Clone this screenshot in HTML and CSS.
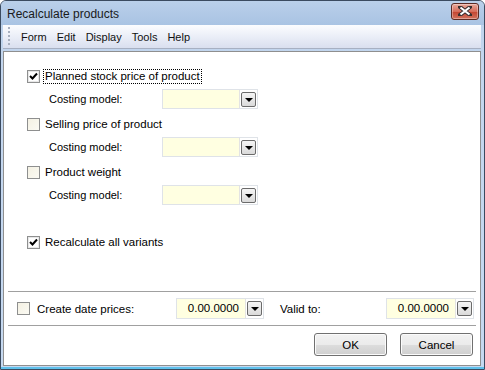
FILE: index.html
```html
<!DOCTYPE html>
<html lang="en">
<head>
    <title>Recalculate products</title>
    <meta charset="utf-8"/>
    <link rel="stylesheet" href="styles.css">
</head>
<body>
<div class="window">
    <div class="titlebar">
        <span class="title">Recalculate products</span>
        <span class="close">
            <svg width="14" height="10" viewBox="0 0 14 10">
                <path d="M2 1 L12 9 M12 1 L2 9" stroke="#3a3030" stroke-width="4" stroke-linecap="square"/>
                <path d="M2.5 1.5 L11.5 8.5 M11.5 1.5 L2.5 8.5" stroke="#ffffff" stroke-width="2.2"/>
            </svg>
        </span>
    </div>

    <div class="menubar">
        <span class="grip"></span>
        <span class="menu">Form</span>
        <span class="menu">Edit</span>
        <span class="menu">Display</span>
        <span class="menu">Tools</span>
        <span class="menu">Help</span>
    </div>

    <div class="panel">
        <div class="options">
            <div class="group">
                <div class="check-row">
                    <span class="checkbox checked"><svg width="9" height="9" viewBox="0 0 9 9"><path d="M1 4 L3.5 6.5 L8 1.5" stroke="#000" stroke-width="2" fill="none"/></svg></span>
                    <span class="focus">Planned stock price of product</span>
                </div>
                <div class="combo-row">
                    <span class="combo-label">Costing model:</span>
                    <span class="combo"><span class="combo-value"></span><span class="drop"><span class="arrow"></span></span></span>
                </div>
            </div>

            <div class="group">
                <div class="check-row">
                    <span class="checkbox"></span>
                    <span>Selling price of product</span>
                </div>
                <div class="combo-row">
                    <span class="combo-label">Costing model:</span>
                    <span class="combo"><span class="combo-value"></span><span class="drop"><span class="arrow"></span></span></span>
                </div>
            </div>

            <div class="group">
                <div class="check-row">
                    <span class="checkbox"></span>
                    <span>Product weight</span>
                </div>
                <div class="combo-row">
                    <span class="combo-label">Costing model:</span>
                    <span class="combo"><span class="combo-value"></span><span class="drop"><span class="arrow"></span></span></span>
                </div>
            </div>

            <div class="check-row recalc">
                <span class="checkbox checked"><svg width="9" height="9" viewBox="0 0 9 9"><path d="M1 4 L3.5 6.5 L8 1.5" stroke="#000" stroke-width="2" fill="none"/></svg></span>
                <span>Recalculate all variants</span>
            </div>
        </div>

        <div class="sep"></div>

        <div class="date-row">
            <span class="checkbox"></span>
            <span class="date-label">Create date prices:</span>
            <span class="combo date"><span class="combo-value">0.00.0000</span><span class="drop"><span class="arrow"></span></span></span>
            <span class="valid-label">Valid to:</span>
            <span class="combo date"><span class="combo-value">0.00.0000</span><span class="drop"><span class="arrow"></span></span></span>
        </div>

        <div class="sep"></div>

        <div class="buttons">
            <span class="button">OK</span>
            <span class="button">Cancel</span>
        </div>
    </div>
</div>
</body>
</html>
```

FILE: styles.css
```css
body {
    margin: 0;
    padding: 0;
    background: #ffffff;
}

.window {
    box-sizing: border-box;
    width: 485px;
    height: 370px;
    display: flex;
    flex-direction: column;
    border: 1px solid #3b4b60;
    border-radius: 6px 6px 0 0;
    background: linear-gradient(#bcd2ec, #c3d6ee 60px, #c6d9f0);
    box-shadow: inset 0 -2px 0 #5fc1ec;
    padding: 0 3px 3px 2px;
    font-family: "Liberation Sans", Arial, sans-serif;
    font-size: 11px;
    color: #000;
    overflow: hidden;
}

/* title bar */
.titlebar {
    height: 24px;
    display: flex;
    align-items: center;
    justify-content: space-between;
    background: linear-gradient(#bad0ea, #a9c3e3);
    margin: 0 -3px 0 -2px;
    padding: 0 5px 0 6px;
}

.title {
    font-size: 12px;
    color: #1a1a1a;
    padding-top: 1px;
}

.close {
    width: 28px;
    height: 17px;
    box-sizing: border-box;
    margin-top: -4px;
    display: flex;
    align-items: center;
    justify-content: center;
    border: 1px solid #5b2a24;
    border-radius: 3px;
    background: linear-gradient(#e9a99b, #d66c5b 50%, #c44733 55%, #d2735e);
    box-shadow: inset 0 0 0 1px rgba(255,255,255,0.35);
}

/* menu bar */
.menubar {
    height: 24px;
    display: flex;
    align-items: center;
    background: linear-gradient(#fbfcfe, #eef1f9 40%, #d9dfef);
    border-bottom: 1px solid #a7b0c2;
    box-sizing: border-box;
    padding-left: 5px;
    font-size: 11px;
}

.grip {
    width: 2px;
    height: 19px;
    margin-right: 6px;
    background-image: linear-gradient(#a8b0bf 50%, transparent 50%);
    background-size: 2px 4px;
}

.menu {
    padding: 0 5px;
    color: #111;
}

/* main panel */
.panel {
    flex: 1;
    margin-top: 2px;
    display: flex;
    flex-direction: column;
    background: #ffffff;
    border: 1px solid #8f8f8f;
}

.options {
    flex: 1;
    padding: 14px 0 0 23px;
}

.group {
    margin-bottom: 5px;
}

.check-row {
    height: 20px;
    display: flex;
    align-items: center;
    font-size: 11.5px;
}

.checkbox {
    width: 13px;
    height: 13px;
    box-sizing: border-box;
    border: 1px solid #8e8f8f;
    background: linear-gradient(135deg, #f4f1e3, #fbfaf3);
    margin-right: 5px;
    display: flex;
    align-items: center;
    justify-content: center;
    flex-shrink: 0;
}

.checkbox.checked {
    background: #ffffff;
    box-shadow: inset 0 0 0 1px #e8e8e8;
}

.focus {
    outline: 1px dotted #000;
    padding: 0 1px;
    margin-left: -1px;
    line-height: 13px;
}

.combo-row {
    height: 20px;
    margin-top: 3px;
    display: flex;
    align-items: center;
    padding-left: 22px;
}

.combo-label {
    width: 113px;
}

.combo {
    width: 96px;
    height: 20px;
    box-sizing: border-box;
    display: flex;
    align-items: center;
    border: 1px solid #dfe3e8;
    background: #ffffff;
}

.combo-value {
    flex: 1;
    height: 100%;
    background: #ffffe1;
    border-right: 1px solid #e3e3e3;
    text-align: right;
    line-height: 19px;
    padding-right: 6px;
}

.drop {
    width: 15px;
    height: 15px;
    box-sizing: border-box;
    margin: 0 1px 0 1px;
    border: 1px solid #6b6b6b;
    border-radius: 2px;
    background: linear-gradient(#f5f5f5, #dadada);
    display: flex;
    align-items: center;
    justify-content: center;
}

.arrow {
    width: 0;
    height: 0;
    border-left: 4px solid transparent;
    border-right: 4px solid transparent;
    border-top: 4px solid #000;
    margin-top: 1px;
}

.recalc {
    margin-top: 27px;
}

.sep {
    height: 1px;
    background: #a0a0a0;
    margin: 0 4px;
}

/* date prices */
.date-row {
    height: 33px;
    display: flex;
    align-items: center;
    padding-left: 13px;
    font-size: 11.5px;
}

.date-row .checkbox {
    margin-right: 7px;
}

.date-label {
    width: 139px;
}

.combo.date {
    width: 88px;
    height: 21px;
}

.valid-label {
    width: 106px;
    margin-left: 16px;
}

/* buttons */
.buttons {
    height: 39px;
    display: flex;
    justify-content: flex-end;
    align-items: flex-start;
    padding: 7px 7px 0 0;
    box-sizing: border-box;
    gap: 13px;
}

.button {
    width: 73px;
    height: 23px;
    box-sizing: border-box;
    border: 1px solid #707070;
    border-radius: 3px;
    background: linear-gradient(#f2f2f2, #ebebeb 50%, #dddddd 51%, #cfcfcf);
    box-shadow: inset 0 0 0 1px #fbfbfb;
    display: flex;
    align-items: center;
    justify-content: center;
    font-size: 11.5px;
}
```
